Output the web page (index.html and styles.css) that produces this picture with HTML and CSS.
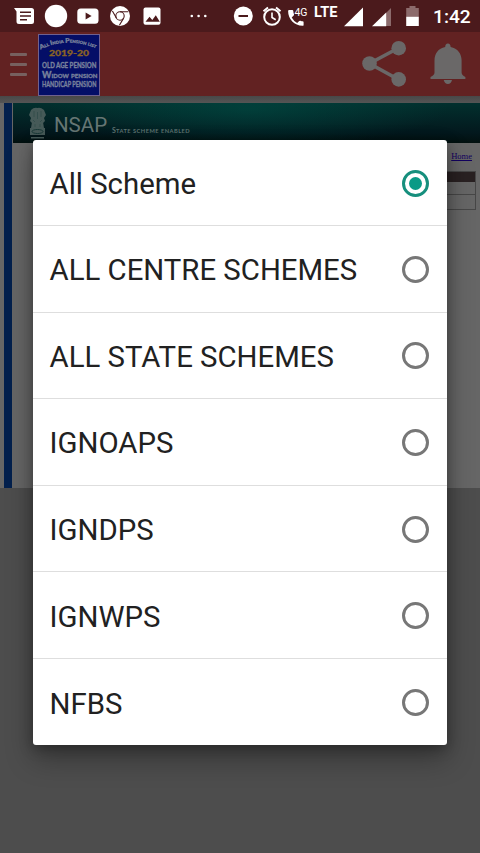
FILE: index.html
```html
<!DOCTYPE html>
<html lang="en">
<head>
<meta charset="utf-8">
<title>Pension List</title>
<link rel="stylesheet" href="styles.css">
</head>
<body>
<div class="screen">
  <header class="status">
    <svg class="status-icons" width="430" height="32" viewBox="0 0 430 32" fill="#fff">
      <path d="M14 8h17.500q2.500 0 2.500 2.500v11q0 2.500-2.500 2.500h-12.500q-2.500 0-2.500-2.500v-10z"/>
      <path d="M20 12.300h11M20 16h11M20 19.800h7" stroke="#4b1a1c" stroke-width="1.600"/>
      <circle cx="56" cy="16" r="11.200"/>
      <rect x="77.300" y="8.500" width="21.200" height="15.300" rx="3.500"/>
      <path d="M85.600 12.500v7l6-3.500z" fill="#4b1a1c"/>
      <circle cx="120" cy="16" r="10"/>
      <g fill="none" stroke="#4b1a1c" stroke-width="1.100"><circle cx="120" cy="16" r="4.200"/><path d="M120 11.800h8.300M116.400 18.100l-4-7M123.600 18.100l-4.200 7.200"/></g>
      <rect x="143.500" y="7.500" width="17" height="17.300" rx="2"/>
      <path d="M145.500 21.700l4-5 2.800 3.300 3.500-4.700 4 6.400z" fill="#4b1a1c"/>
      <circle cx="191.800" cy="16" r="1.300"/><circle cx="198.600" cy="16" r="1.300"/><circle cx="205.300" cy="16" r="1.300"/>
      <circle cx="243.300" cy="16" r="9.500"/>
      <path d="M238.500 16h9.500" stroke="#4b1a1c" stroke-width="2"/>
      <g fill="none" stroke="#fff" stroke-width="2"><circle cx="272" cy="17" r="7.800"/><path d="M272 12.500v5l3.700 2.300" stroke-width="1.600"/><path d="M263.500 11.300l4.500-3.800M280.500 11.300l-4.500-3.800"/></g>
      <path d="M289 10h3.300q.9 0 1 .9.100 1.800.7 3.400.2.700-.3 1.200l-2 2q2 3.700 5.500 5.500l2-2q.5-.5 1.200-.3 1.500.5 2.200.5 1 .1 1 1v2.700q0 .9-1 .9c-8.200 0-14.500-6.500-14.500-14.700q0-1 1-1z"/>
      <text x="294.500" y="16" class="net" textLength="13" lengthAdjust="spacingAndGlyphs">4G</text>
      <text x="314" y="16.500" class="lte" textLength="23.500" lengthAdjust="spacingAndGlyphs">LTE</text>
      <path d="M344 26.200l19-18.700v18.700z"/>
      <path d="M386 13l5-5v18h-5z" fill="#8c6b6c"/><path d="M372 26.200l14.200-13.800v13.800z"/>
      <path d="M409.500 6h6v2h3.300v9h-12.600V8h3.300z" fill="#8c6b6c"/><path d="M406.200 16.800h12.600v9.200h-12.600z"/>
    </svg>
    <span class="clock">1:42</span>
  </header>
  <div class="appbar">
    <div class="burger"><i></i><i></i><i></i></div>
    <svg class="logo" width="62" height="62" viewBox="0 0 62 62">
      <defs><path id="arc" d="M2.500 15.500Q31 1.500 61.500 16"/></defs>
      <rect x=".5" y=".5" width="61" height="61" fill="#040e67" stroke="#70618e"/>
      <text class="arch"><textPath href="#arc" textLength="57" lengthAdjust="spacingAndGlyphs">All India Pension list</textPath></text>
      <text class="year" x="11" y="21.700" textLength="40" lengthAdjust="spacingAndGlyphs">2019-20</text>
      <text class="line" x="4" y="33.500" textLength="54.500" lengthAdjust="spacingAndGlyphs">OLD AGE PENSION</text>
      <text class="line caps" x="4" y="43.800" textLength="55.500" lengthAdjust="spacingAndGlyphs">Widow pension</text>
      <text class="line" x="4" y="53.300" textLength="54.500" lengthAdjust="spacingAndGlyphs">HANDICAP PENSION</text>
    </svg>
    <svg class="actions" width="120" height="64" viewBox="0 0 120 64" fill="#6a6868">
      <path d="M38.500 16L9.500 31.500l29 16" fill="none" stroke="#6a6868" stroke-width="3.600"/>
      <circle cx="9.500" cy="31.500" r="7.300"/><circle cx="38.700" cy="16.200" r="7.300"/><circle cx="38.700" cy="47.400" r="7.300"/>
      <path d="M85.200 15q0-3.500 2.700-3.500t2.700 3.500c7 1.500 11 6.500 11 13.500v12q0 2.500 3.800 4.500v2H70.500v-2q4-2 4-4.500v-12c0-7 3.700-12 10.700-13.500zM83.700 48h8.300q-1 4-4.100 4t-4.200-4z"/>
    </svg>
  </div>
  <main class="web">
    <div class="site">
      <div class="banner">
        <svg width="21" height="33" viewBox="0 0 21 33" fill="#465a58">
          <path d="M4 3q3-3 6.500-2 3-1 6.500 2l2 5-2 3 1 3-3 3H6l-3-3 1-3-2-3z"/>
          <path d="M5 15h11l1 6H4zM3 21h15v7H3zM4 30h13v1.500H4z"/>
          <path d="M7 4v6M14 4v6M10.500 5v7M6 13l2 2M15 13l-2 2M8 17v3M13 17v3" stroke="#304b49" stroke-width=".8"/>
          <ellipse cx="10.500" cy="24.500" rx="5.500" ry="2" fill="none" stroke="#183836"/>
        </svg>
        <span class="nsap">NSAP</span>
        <span class="tag">S<small>TATE SCHEME ENABLED</small></span>
      </div>
      <a class="home">Home</a>
      <div class="table"><div class="th"></div><div class="tr"></div><div class="tr last"></div></div>
    </div>
  </main>
  <div class="dialog">
    <div class="row"><span>All Scheme</span><i class="radio on"></i></div>
    <div class="row"><span>ALL CENTRE SCHEMES</span><i class="radio"></i></div>
    <div class="row"><span>ALL STATE SCHEMES</span><i class="radio"></i></div>
    <div class="row"><span>IGNOAPS</span><i class="radio"></i></div>
    <div class="row"><span>IGNDPS</span><i class="radio"></i></div>
    <div class="row"><span>IGNWPS</span><i class="radio"></i></div>
    <div class="row"><span>NFBS</span><i class="radio"></i></div>
  </div>
</div>
</body>
</html>
```

FILE: styles.css
```css
* { box-sizing: border-box; }
body { margin: 0; font-family: Roboto, "Liberation Sans", sans-serif; }
.screen { position: relative; width: 480px; height: 853px; overflow: hidden; background: #4d4d4d; }
.status { display: flex; height: 32px; background: #4b1a1c; color: #fff; }
.status-icons { flex: none; }
.clock { font-size: 19.2px; font-weight: 500; line-height: 33px; margin-left: 3px; white-space: nowrap; }
.net { font-size: 11px; }
.lte { font-size: 14px; font-weight: 700; }
.appbar { display: flex; height: 64px; background: #622222; }
.burger { width: 38px; padding: 21px 10px 0; display: flex; flex-direction: column; gap: 7px; }
.burger i { height: 3px; width: 17px; background: #77605f; border-radius: 1px; }
.logo { margin-top: 2px; }
.logo text { font-family: Lato, sans-serif; font-weight: 900; fill: #77809b; stroke: #77809b; stroke-width: .3px; }
.logo .arch { font-size: 6.4px; font-variant: small-caps; }
.logo .year { font-size: 8.3px; fill: #8a6225; stroke: #8a6225; }
.logo .line { font-size: 8.2px; }
.logo .caps { font-size: 9px; font-variant: small-caps; }
.actions { margin-left: auto; }
.web { height: 392px; padding: 7px 0 0 4px; background: linear-gradient(#484848, #555 7px, #666 7px); }
.site { height: 385px; border-left: 8px solid #03204d; padding-left: 1px; background: #666; display: flex; flex-direction: column; }
.banner { height: 40px; display: flex; padding: 4px 0 0 14px; background: radial-gradient(ellipse 200px 38px at 235px 6px, rgba(0, 82, 73, .5), transparent), linear-gradient(#02302e, #03181d 75%, #02100f); }
.nsap { font-size: 20.5px; line-height: 37px; margin-left: 6px; color: #667674; }
.tag { font: 7px/46px Lato, sans-serif; font-weight: 700; margin-left: 5px; color: #5e7371; white-space: nowrap; }
.tag small { font-size: 5.7px; letter-spacing: .48px; }
.home { align-self: flex-end; margin: 8px 8px 0 0; font: 8.5px/10px "Liberation Serif", serif; color: #12005f; text-decoration: underline; }
.table { margin: 10px 4px 0 300px; height: 39px; border: 1px solid #474747; }
.th { height: 10px; background: #292122; }
.tr { height: 13px; border-bottom: 1px solid #474747; }
.last { border: 0; }
.dialog { position: absolute; left: 33px; top: 140px; width: 414px; height: 605px; background: #fff; border-radius: 3px; box-shadow: 0 14px 28px rgba(0, 0, 0, .3), 0 3px 14px rgba(0, 0, 0, .3); display: grid; grid-template-rows: 86px repeat(6, 86.6px); }
.row { display: flex; align-items: center; justify-content: space-between; padding: 2px 18px 0 16.5px; border-bottom: 1.3px solid #dedede; font-size: 29.35px; line-height: 34px; color: #212121; white-space: nowrap; }
.row:last-child { border: 0; }
.row span { padding-top: 1px; }
.radio { width: 27px; height: 27px; border: 3px solid #777; border-radius: 50%; margin-top: -1px; display: grid; place-items: center; }
.on { border-color: #168f7d; }
.on::after { content: ""; width: 13px; height: 13px; border-radius: 50%; background: #0a9a86; }
```
